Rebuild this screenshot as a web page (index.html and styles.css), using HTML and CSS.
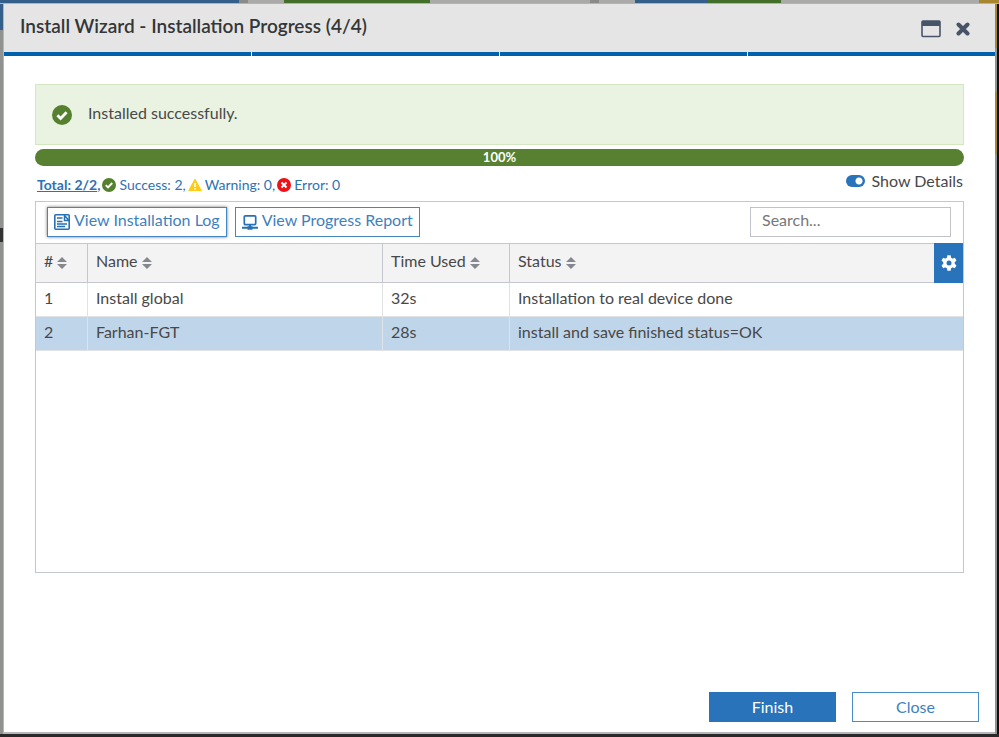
FILE: index.html
```html
<!DOCTYPE html>
<html lang="en">
<head>
<meta charset="utf-8">
<title>Install Wizard</title>
<link rel="stylesheet" href="styles.css">
</head>
<body>
<svg class="sprite" aria-hidden="true">
  <symbol id="check" viewBox="0 0 20 20"><circle cx="10" cy="10" r="10" fill="#558030"/><path d="M5.4 10.2l3.2 3.2 6-6.2" fill="none" stroke="#fff" stroke-width="2.8"/></symbol>
  <symbol id="sort" viewBox="0 0 10 12"><path d="M5 0l5 5H0zM5 12l5-5H0z" fill="#85898f"/></symbol>
</svg>
<div class="screen">
  <div class="behind-top"><i class="blue wide"></i><i class="gray"></i><i class="pale"></i><i class="green mid"></i><i class="pale long"></i><i class="gray"></i><i class="pale"></i><i class="blue short"></i><i class="green short"></i><i class="pale rest"></i><i class="gold"></i></div>
  <div class="behind-left"><i class="blue"></i><i class="fill"></i><i class="dark"></i></div>
  <main class="dialog">
    <header class="titlebar">
      <h1>Install Wizard - Installation Progress (4/4)</h1>
      <div class="window-actions">
        <button type="button" aria-label="Maximize"><svg width="20" height="18" viewBox="0 0 20 18"><rect x="1" y="1" width="18" height="15.5" rx="1" fill="none" stroke="#475468" stroke-width="1.6"/><path d="M1 1h18v5H1z" fill="#475468"/></svg></button>
        <button type="button" aria-label="Close window"><svg width="14" height="14" viewBox="0 0 14 14"><path d="M2.5 2.5l9 9M11.5 2.5l-9 9" stroke="#475468" stroke-width="4" stroke-linecap="round"/></svg></button>
      </div>
    </header>
    <div class="steps"><span></span><span></span><span></span><span></span></div>
    <section class="content">
      <div class="notice"><svg class="notice-icon"><use href="#check"/></svg><span>Installed successfully.</span></div>
      <div class="progress" role="progressbar" aria-valuenow="100" aria-valuemin="0" aria-valuemax="100">100%</div>
      <div class="summary">
        <div class="counts">
          <a href="#"><b>Total: 2/2</b></a><b>,</b>
          <svg class="count-icon"><use href="#check"/></svg><span>Success: 2,</span>
          <svg class="count-icon" viewBox="0 0 14 14"><path d="M7 1.2L13.3 12.6H.7z" fill="#fc1" stroke="#fc1" stroke-linejoin="round"/><path d="M7 5v4M7 10.2v1.6" stroke="#fff" stroke-width="1.6"/></svg><span>Warning: 0,</span>
          <svg class="count-icon" viewBox="0 0 14 14"><circle cx="7" cy="7" r="7" fill="#f01018"/><path d="M4.5 4.5l5 5M9.5 4.5l-5 5" stroke="#fff" stroke-width="2"/></svg><span>Error: 0</span>
        </div>
        <label class="details"><input type="checkbox" checked><span>Show Details</span></label>
      </div>
      <div class="panel">
        <div class="toolbar">
          <button type="button" class="tool active"><svg width="16" height="16" viewBox="0 0 16 16" fill="none" stroke="#2670b5"><rect x=".8" y=".8" width="14.4" height="14.4" rx="1" stroke-width="1.6"/><path d="M3 4h5.500M3 7.500h5.500M3 10h10M3 12.500h8" stroke-width="1.3"/><path d="M10.500 1v5.500H15M11 2l3.500 4" stroke-width="1.5"/></svg><span>View Installation Log</span></button>
          <button type="button" class="tool"><svg width="16" height="16" viewBox="0 0 16 16" fill="none" stroke="#2670b5"><rect x="2.3" y="1.8" width="11.4" height="8.8" rx="1" stroke-width="1.7"/><path d="M8 10.500v3M0 13.800h16" stroke-width="2"/><path d="M5.500 14h5" stroke-width="3.5"/></svg><span>View Progress Report</span></button>
          <input class="search" type="text" placeholder="Search..." aria-label="Search">
        </div>
        <table>
          <colgroup><col class="c-num"><col class="c-name"><col class="c-time"><col><col class="c-gear"></colgroup>
          <thead><tr>
            <th>#<svg class="sort"><use href="#sort"/></svg></th>
            <th>Name<svg class="sort"><use href="#sort"/></svg></th>
            <th>Time Used<svg class="sort"><use href="#sort"/></svg></th>
            <th>Status<svg class="sort"><use href="#sort"/></svg></th>
            <th class="gear"><button type="button" aria-label="Table settings"><svg width="16" height="16" viewBox="-8 -8 16 16"><g fill="#fff"><circle r="5.8"/><rect x="-1.9" y="-7.7" width="3.8" height="15.4" rx=".8"/><rect x="-1.9" y="-7.7" width="3.8" height="15.4" rx=".8" transform="rotate(60)"/><rect x="-1.9" y="-7.7" width="3.8" height="15.4" rx=".8" transform="rotate(120)"/></g><circle r="2.5" fill="#2873b9"/></svg></button></th>
          </tr></thead>
          <tbody>
            <tr><td>1</td><td>Install global</td><td>32s</td><td colspan="2">Installation to real device done</td></tr>
            <tr class="selected"><td>2</td><td>Farhan-FGT</td><td>28s</td><td colspan="2">install and save finished status=OK</td></tr>
          </tbody>
        </table>
      </div>
    </section>
    <footer><button type="button" class="primary">Finish</button><button type="button">Close</button></footer>
  </main>
  <div class="behind-right"><i class="gold"></i><i class="fill"></i></div>
</div>
</body>
</html>
```
FILE: styles.css
```css
* { box-sizing: border-box; }
body { margin: 0; font: 16px/20px Lato, "Liberation Sans", sans-serif; color: #484848; }
button, input { font: inherit; }
button { padding: 0; border: 0; background: none; cursor: pointer; }
svg { display: block; flex: none; }
.sprite { display: none; }

/* Dimmed page around the dialog */
.screen {
  display: grid;
  grid-template: 4px 1fr / 4px 1fr 4px;
  min-height: 100vh;
  background: #909290;
  border-bottom: 3px solid #292929;
}
.behind-top { grid-column: 1 / -1; display: flex; border-bottom: 1px solid #aeb4b9; }
.behind-top i { flex: 0 0 36px; }
.behind-top .wide { flex-basis: 239px; }
.behind-top .gray { flex-basis: 9px; }
.behind-top .mid { flex-basis: 146px; }
.behind-top .long { flex-basis: 160px; }
.behind-top .short { flex-basis: 73px; }
.behind-top .rest { flex: 1; }
.behind-top .gold { flex-basis: 20px; }
.blue { background: #345f8b; }
.green { background: #446f2b; }
.pale { background: #aaaba9; }
.gray { background: #8a8a89; }
.gold { background: #a8862d; }
.behind-left, .behind-right { display: flex; flex-direction: column; }
.behind-left .blue { flex: 0 0 26px; }
.behind-left .fill { flex: 0 0 198px; }
.behind-left .dark { flex: 0 0 14px; background: #333; }
.behind-left { border-right: 1px solid #b2b7ba; }
.behind-right { border-right: 2px solid #111; }
.behind-right .gold { flex: 0 0 150px; background: linear-gradient(#a8862d 44px, #909290 44px 88px, #a8862d 88px); }

.dialog { display: flex; flex-direction: column; background: #fff; min-width: 0; border-bottom: 2px solid #b5b7ba; }
.titlebar { display: flex; align-items: center; justify-content: space-between; height: 48px; padding: 2px 25px 0 16px; background: #e5e5e5; }
h1 { margin: 0; font-size: 19px; line-height: 24px; font-weight: 600; color: #343638; }
.titlebar h1 { padding-bottom: 6px; }
.window-actions { display: flex; align-items: center; gap: 15px; }
.steps { display: flex; gap: 1px; height: 4px; }
.steps span { flex: 1; background: #0060ac; }

.content { flex: 1; display: flex; flex-direction: column; padding: 28px 31px 0; }
.notice { display: flex; align-items: center; gap: 16px; height: 61px; padding: 0 16px; background: #eaf3e1; border: 1px solid #d3e7c1; }
.notice span { padding-bottom: 4px; }
.notice-icon { width: 20px; height: 20px; }
.progress { margin-top: 4px; height: 17px; border-radius: 9px; background: #578130; color: #fff; font-size: 13px; line-height: 17px; font-weight: 700; text-align: center; }
.summary { display: flex; justify-content: space-between; height: 35px; padding: 0 1px 0 2px; }
.counts { display: flex; align-items: center; height: 38px; font-size: 14px; color: #2d72b5; }
.counts a { color: inherit; }
.count-icon { width: 14px; height: 14px; margin: 0 3px 0 2px; }
.details { display: flex; align-items: center; gap: 7px; height: 30px; }
.details input { appearance: none; width: 19px; height: 12px; margin: 0; border-radius: 6px; background: radial-gradient(circle at 13px 6px, #fff 3px, #2873b9 4px); }

.panel { height: 372px; border: 1px solid #c4c8ce; }
.toolbar { display: flex; align-items: center; gap: 8px; height: 41px; padding: 0 12px 2px 11px; }
.tool { display: flex; align-items: center; gap: 4px; height: 30px; padding: 0 6px; border: 1px solid #4585c2; color: #3f7fbd; }
.tool span { padding-bottom: 4px; }
.active { box-shadow: 0 0 3px #777; }
.search { width: 201px; height: 30px; margin-left: auto; padding: 0 11px 4px; border: 1px solid #bfc3c9; color: #444; }
.search::placeholder { color: #777; opacity: 1; }
table { width: 100%; table-layout: fixed; border-collapse: separate; border-spacing: 0; }
.c-num { width: 52px; }
.c-name { width: 295px; }
.c-time { width: 127px; }
.c-gear { width: 29px; }
th, td { padding: 0 8px; text-align: left; font-weight: 400; }
th { height: 40px; padding-bottom: 4px; background: #f3f3f3; border: solid #c4c8ce; border-width: 1px 1px 1px 0; }
th:nth-child(4) { border-right: 0; }
td { height: 34px; padding-bottom: 3px; border: solid #e0e2e5; border-width: 0 1px 1px 0; }
td:last-child { border-right: 0; }
.selected td { background: #bfd5ea; }
.sort { display: inline-block; width: 10px; height: 12px; margin-left: 4px; vertical-align: -2px; }
.gear { padding: 0; border: 0; background: #2873b9; }
.gear button { display: grid; place-items: center; width: 100%; height: 39px; }

footer { display: flex; justify-content: flex-end; gap: 16px; padding: 0 16px 10px; }
footer button { width: 127px; height: 30px; border: 1px solid #4a8cc6; color: #3f7fbd; }
footer .primary { background: #2873b9; border-color: #2873b9; color: #fff; }
```
